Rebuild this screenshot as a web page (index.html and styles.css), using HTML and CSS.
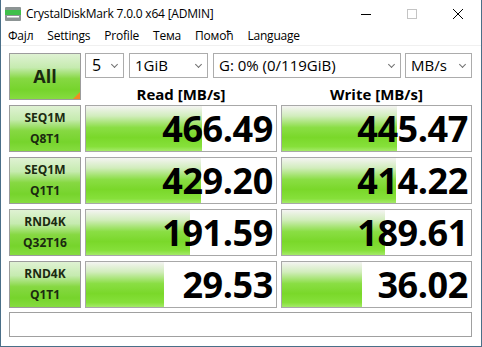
FILE: index.html
```html
<!DOCTYPE html>
<html lang="en">
<head>
  <meta charset="UTF-8">
  <title>CrystalDiskMark 7.0.0 x64 [ADMIN]</title>
  <link rel="stylesheet" href="styles.css">
</head>
<body>
  <div class="window">
    <div class="titlebar">
      <svg class="app-icon" width="16" height="14" viewBox="0 0 16 14">
        <rect x="0" y="0" width="16" height="14" rx="1" fill="#8c9494"/>
        <rect x="0" y="3" width="16" height="5" fill="#3fbf4a"/>
        <rect x="2" y="9" width="12" height="1.5" fill="#ffffff"/>
      </svg>
      <span class="title">CrystalDiskMark 7.0.0 x64 [ADMIN]</span>
      <div class="win-controls">
        <span class="wc wc-min"><svg width="10" height="10" viewBox="0 0 10 10"><path d="M0 5.5h10" stroke="#000" stroke-width="1"/></svg></span>
        <span class="wc wc-max"><svg width="10" height="10" viewBox="0 0 10 10"><rect x="0.5" y="0.5" width="9" height="9" fill="none" stroke="#c4c4c4"/></svg></span>
        <span class="wc wc-close"><svg width="10" height="10" viewBox="0 0 10 10"><path d="M0 0L10 10M10 0L0 10" stroke="#000" stroke-width="1"/></svg></span>
      </div>
    </div>

    <div class="menubar">
      <span>Фајл</span>
      <span>Settings</span>
      <span>Profile</span>
      <span>Тема</span>
      <span>Помоћ</span>
      <span>Language</span>
    </div>

    <div class="main">
      <div class="grid">
        <div class="btn btn-all">All</div>
        <div class="top">
          <div class="combos">
            <div class="combo c-count">5</div>
            <div class="combo c-size">1GiB</div>
            <div class="combo c-drive">G: 0% (0/119GiB)</div>
            <div class="combo c-unit">MB/s</div>
          </div>
          <div class="heads">
            <div>Read [MB/s]</div>
            <div>Write [MB/s]</div>
          </div>
        </div>

        <div class="btn">SEQ1M<br>Q8T1</div>
        <div class="cell" style="--w:116px">466.49</div>
        <div class="cell" style="--w:115px">445.47</div>

        <div class="btn">SEQ1M<br>Q1T1</div>
        <div class="cell" style="--w:115px">429.20</div>
        <div class="cell" style="--w:114px">414.22</div>

        <div class="btn">RND4K<br>Q32T16</div>
        <div class="cell" style="--w:104px">191.59</div>
        <div class="cell" style="--w:103px">189.61</div>

        <div class="btn">RND4K<br>Q1T1</div>
        <div class="cell" style="--w:78px">29.53</div>
        <div class="cell" style="--w:80px">36.02</div>
      </div>
      <div class="status"></div>
    </div>
  </div>
</body>
</html>
```

FILE: styles.css
```css
* {
  box-sizing: border-box;
  margin: 0;
  padding: 0;
}

body {
  font-family: "Open Sans", "Noto Sans", sans-serif;
  background-color: #ffffff;
  color: #000;
}

.window {
  width: 482px;
  height: 347px;
  background-color: #ffffff;
  border: 1px solid #4a6f88;
  border-top: none;
  overflow: hidden;
}

/* title bar */
.titlebar {
  height: 27px;
  display: flex;
  align-items: center;
}

.app-icon {
  margin-left: 4px;
  margin-right: 5px;
  margin-top: 1px;
}

.title {
  font-size: 12px;
  letter-spacing: -0.2px;
}

.win-controls {
  margin-left: auto;
  display: flex;
  height: 100%;
}

.wc {
  width: 46px;
  display: flex;
  align-items: center;
  justify-content: center;
}

/* menu */
.menubar {
  height: 19px;
  display: flex;
  align-items: center;
  padding-left: 7px;
  padding-bottom: 1px;
  font-size: 12px;
  letter-spacing: -0.2px;
  border-bottom: 1px solid #f0f0f0;
}

.menubar span {
  margin-right: 14px;
}

/* main area */
.main {
  padding: 7px 8px 0 8px;
}

.grid {
  display: grid;
  grid-template-columns: 72px 192px 191px;
  grid-auto-rows: 47px;
  column-gap: 4px;
  row-gap: 5px;
}

.btn {
  border: 1px solid #9c9c9c;
  background: linear-gradient(#dff2d3 0%, #c6ebb0 30%, #86d842 55%, #76d42c 80%, #86dc40 100%);
  color: #1b2a10;
  font-weight: bold;
  font-size: 12px;
  line-height: 21px;
  text-align: center;
  display: flex;
  align-items: center;
  justify-content: center;
  padding-bottom: 1px;
}

.btn-all {
  font-size: 18px;
  position: relative;
}

.btn-all::after {
  content: "";
  position: absolute;
  right: 0;
  bottom: 0;
  border-style: solid;
  border-width: 0 0 7px 7px;
  border-color: transparent transparent #f08a24 transparent;
}

.top {
  grid-column: 2 / 4;
  display: flex;
  flex-direction: column;
}

.combos {
  display: flex;
  height: 25px;
}

.combo {
  border: 1px solid #acacac;
  background-color: #ffffff;
  font-size: 15px;
  line-height: 23px;
  padding-left: 5px;
  position: relative;
  margin-right: 5px;
}

.combo::after {
  content: "";
  position: absolute;
  right: 6px;
  top: 8px;
  width: 4px;
  height: 4px;
  border-right: 1px solid #707070;
  border-bottom: 1px solid #707070;
  transform: rotate(45deg);
}

.c-count { width: 39px; padding-left: 6px; font-size: 16px; }
.c-size { width: 79px; }
.c-drive { width: 188px; margin-right: 4px; }
.c-unit { width: 67px; margin-right: 0; }

.heads {
  display: grid;
  grid-template-columns: 192px 191px;
  column-gap: 4px;
  flex: 1;
}

.heads div {
  text-align: center;
  font-weight: bold;
  font-size: 15px;
  padding-top: 6px;
}

.cell {
  border: 1px solid #a8a8a8;
  background: linear-gradient(#f4f4f2 0%, #d2edbd 22%, #8ade44 48%, #7ad82a 70%, #86e03a 90%, #a4ea68 100%) no-repeat;
  background-size: var(--w) 100%;
  font-weight: bold;
  font-size: 36px;
  line-height: 46px;
  text-align: right;
  padding-right: 3px;
  letter-spacing: -0.4px;
}

.status {
  margin-top: 4px;
  height: 25px;
  width: 463px;
  border: 1px solid #a0a0a0;
  background-color: #ffffff;
}
```
